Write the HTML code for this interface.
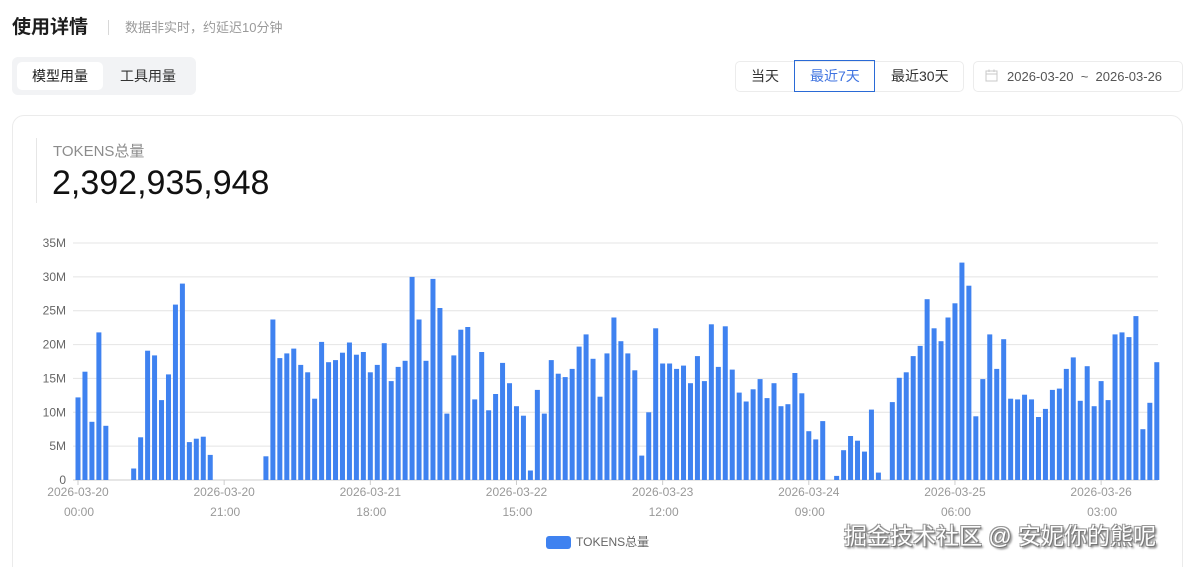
<!DOCTYPE html>
<html style="width:1197px;height:567px;overflow:hidden"><head><meta charset="utf-8"><style>
*{margin:0;padding:0;box-sizing:border-box}
body{width:1197px;height:567px;overflow:hidden;background:#fff;font-family:"Liberation Sans","Noto Sans CJK SC",sans-serif;position:relative;color:#1d1d1d}
#w{position:absolute;left:0;top:0;width:1197px;height:567px;overflow:hidden}
.a{position:absolute;white-space:nowrap}
</style></head><body><div id="w">
<div class="a" style="left:12px;top:15px;font-size:19px;font-weight:bold;line-height:26px">使用详情</div>
<div class="a" style="left:108px;top:20px;width:1px;height:15px;background:#d8d8d8"></div>
<div class="a" style="left:125px;top:19px;font-size:13px;color:#9a9a9a;line-height:18px">数据非实时，约延迟10分钟</div>
<div class="a" style="left:12px;top:57px;width:184px;height:38px;background:#f2f3f5;border-radius:6px"></div>
<div class="a" style="left:17px;top:62px;width:86px;height:28px;background:#fff;border-radius:5px"></div>
<div class="a" style="left:32px;top:67px;font-size:14px;line-height:18px;color:#1d1d1d">模型用量</div>
<div class="a" style="left:120px;top:67px;font-size:14px;line-height:18px;color:#333">工具用量</div>
<div class="a" style="left:735px;top:61px;width:229px;height:31px;border:1px solid #ececec;border-radius:5px"></div>
<div class="a" style="left:794px;top:60px;width:81px;height:32px;border:1px solid #2a6ad6"></div>
<div class="a" style="left:751px;top:67px;font-size:14px;line-height:18px;color:#333">当天</div>
<div class="a" style="left:810px;top:67px;font-size:14px;line-height:18px;color:#3f73e0">最近7天</div>
<div class="a" style="left:891px;top:67px;font-size:14px;line-height:18px;color:#333">最近30天</div>
<div class="a" style="left:973px;top:61px;width:210px;height:31px;border:1px solid #ececec;border-radius:5px"></div>
<svg class="a" style="left:985px;top:69px" width="13" height="13" viewBox="0 0 13 13"><rect x="1" y="2" width="11" height="10" fill="none" stroke="#c8c8c8"/><line x1="1" y1="5" x2="12" y2="5" stroke="#c8c8c8"/><line x1="4" y1="0.5" x2="4" y2="3" stroke="#c8c8c8"/><line x1="9" y1="0.5" x2="9" y2="3" stroke="#c8c8c8"/></svg>
<div class="a" style="left:1007px;top:68px;font-size:13px;line-height:17px;color:#555">2026-03-20 &nbsp;~ &nbsp;2026-03-26</div>
<div class="a" style="left:12px;top:115px;width:1171px;height:470px;border:1px solid #ebebeb;border-radius:12px"></div>
<div class="a" style="left:36px;top:138px;width:1px;height:65px;background:#e6e6e6"></div>
<div class="a" style="left:53px;top:142px;font-size:15px;line-height:20px;color:#8c8c8c">TOKENS总量</div>
<div class="a" style="left:52px;top:164px;font-size:34px;line-height:38px;color:#111">2,392,935,948</div>
<svg class="a" style="left:0;top:0" width="1197" height="567" id="ch"></svg>
<div class="a" style="left:546px;top:536px;width:25px;height:13px;background:#3f82f0;border-radius:3px"></div>
<div class="a" style="left:576px;top:534px;font-size:12px;line-height:16px;color:#666">TOKENS总量</div>
<div class="a" style="left:844px;top:520px;font-size:23px;line-height:32px;color:#fff;text-shadow:1px 1px 0 #777,-1px -1px 0 #999,1px -1px 0 #999,-1px 1px 0 #999,2px 2px 2px #555">掘金技术社区 @ 安妮你的熊呢</div>
</div>
<script>
var v=[12.2,16,8.6,21.8,8,0,0,0,1.7,6.3,19.1,18.4,11.8,15.6,25.9,29,5.6,6.1,6.4,3.7,0,0,0,0,0,0,0,
3.5,23.7,18,18.7,19.4,17,15.9,12,20.4,17.4,17.7,18.8,20.3,18.5,18.9,15.9,17,20.2,14.6,16.7,17.6,30,23.7,17.6,29.7,25.4,9.8,18.4,22.2,22.6,11.9,18.9,10.3,12.7,17.3,14.3,10.9,9.5,1.4,
13.3,9.8,17.7,15.7,15.2,16.4,19.7,21.5,17.9,
12.3,18.7,24,20.5,18.7,16.2,3.6,10,22.4,17.2,17.2,16.4,16.9,14.3,18.3,14.6,23,16.7,22.7,16.3,12.9,11.6,13.4,14.9,12.1,14.3,10.9,11.2,15.8,12.8,7.2,6,8.7,0,0.6,4.4,6.5,5.8,4.2,10.4,1.1,0,11.5,15.1,15.9,18.3,19.8,26.7,22.4,20.5,24,26.1,32.1,28.7,9.4,14.9,21.5,16.4,20.8,12,11.9,12.6,11.9,9.3,10.5,13.3,13.5,16.4,18.1,11.7,16.8,10.9,14.6,11.8,21.5,21.8,21.1,24.2,7.5,11.4,17.4];
var s='',k=(480-243)/35;
for(var i=0;i<=7;i++){var y=480-i*5*k;s+='<line x1="73" x2="1158" y1="'+y.toFixed(1)+'" y2="'+y.toFixed(1)+'" stroke="'+(i?'#e4e4e4':'#ccc')+'"/>';s+='<text x="66" y="'+(y+4).toFixed(1)+'" text-anchor="end" font-size="12" fill="#666">'+(i?i*5+'M':'0')+'</text>';}
for(var i=0;i<v.length;i++){var h=v[i]*k;if(h>0){var x=78+i*6.96-2.5;s+='<rect x="'+x.toFixed(2)+'" y="'+(480-h).toFixed(1)+'" width="5" height="'+h.toFixed(1)+'" fill="#3f82f0"/>';}}
var t=[['2026-03-20','00:00'],['2026-03-20','21:00'],['2026-03-21','18:00'],['2026-03-22','15:00'],['2026-03-23','12:00'],['2026-03-24','09:00'],['2026-03-25','06:00'],['2026-03-26','03:00']];
for(var j=0;j<8;j++){var x=78+j*21*6.96;s+='<line x1="'+x+'" x2="'+x+'" y1="480" y2="485" stroke="#ccc"/><text x="'+x+'" y="496" text-anchor="middle" font-size="12" fill="#999">'+t[j][0]+'</text><text x="'+(x+1)+'" y="516" text-anchor="middle" font-size="12" fill="#999">'+t[j][1]+'</text>';}
document.getElementById('ch').innerHTML=s;
</script>
</body></html>
